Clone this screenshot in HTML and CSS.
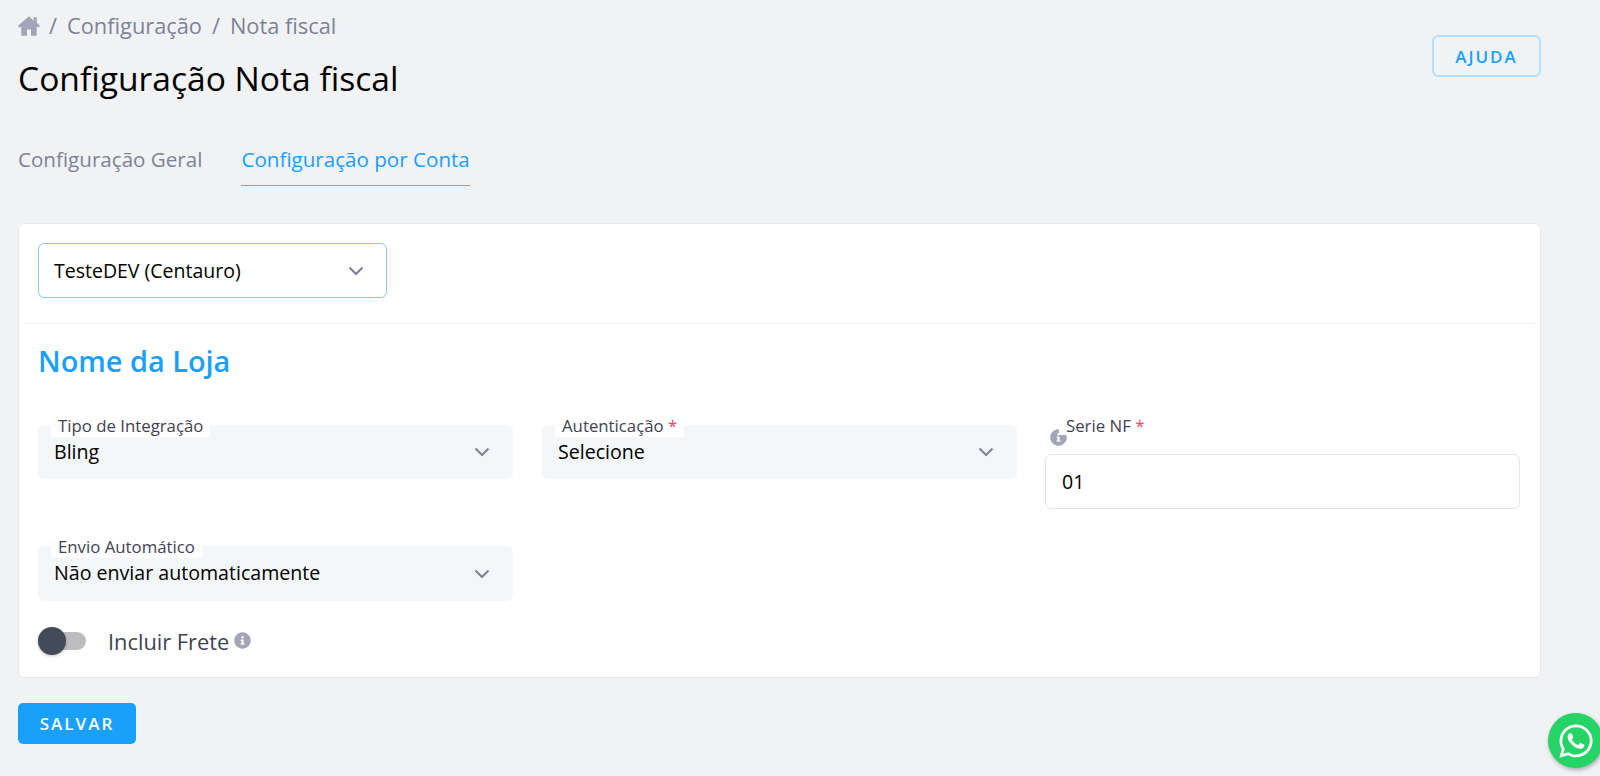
FILE: index.html
```html
<!DOCTYPE html>
<html>
<head>
    <title>Configuração Nota fiscal</title>
    <meta name="viewport" content="width=device-width, initial-scale=1">
    <link rel="stylesheet" href="styles.css">
</head>
<body>
    <div class="page">
        <div class="page-head">
            <div>
                <div class="breadcrumb">
                    <svg class="home-icon" viewBox="0.8 2.5 22.4 20"><path d="M12 2.5L.8 12.2l1.7 2 1.6-1.3V22.500H10V16h4v6.500h5.900V12.900l1.600 1.300 1.700-2-3.300-2.900V3.500h-3.300v3.600z"/></svg>
                    <span>/</span>
                    <span>Configuração</span>
                    <span>/</span>
                    <span>Nota fiscal</span>
                </div>
                <h1 class="page-title">Configuração Nota fiscal</h1>
            </div>
            <button class="button-help">AJUDA</button>
        </div>

        <div class="tabs">
            <a class="tab">Configuração Geral</a>
            <a class="tab tab-active">Configuração por Conta</a>
        </div>

        <div class="card">
            <div class="card-top">
                <div class="account-select">
                    <span>TesteDEV (Centauro)</span>
                    <svg class="chevron" viewBox="0 0 16 10"><path d="M1.5 1.5L8 8l6.5-6.5"/></svg>
                </div>
            </div>
            <div class="card-body">
                <h2 class="store-name">Nome da Loja</h2>
                <div class="form-grid">
                    <div class="field">
                        <label class="field-label">Tipo de Integração</label>
                        <div class="select-box">
                            <span>Bling</span>
                            <svg class="chevron" viewBox="0 0 16 10"><path d="M1.5 1.5L8 8l6.5-6.5"/></svg>
                        </div>
                    </div>
                    <div class="field">
                        <label class="field-label">Autenticação <span class="required">*</span></label>
                        <div class="select-box">
                            <span>Selecione</span>
                            <svg class="chevron" viewBox="0 0 16 10"><path d="M1.5 1.5L8 8l6.5-6.5"/></svg>
                        </div>
                    </div>
                    <div class="field field-input">
                        <svg class="info-icon info-behind" viewBox="0 0 512 512"><path d="M256 8C119.043 8 8 119.083 8 256c0 136.997 111.043 248 248 248s248-111.003 248-248C504 119.083 392.957 8 256 8zm0 110c23.196 0 42 18.804 42 42s-18.804 42-42 42-42-18.804-42-42 18.804-42 42-42zm56 254c0 6.627-5.373 12-12 12h-88c-6.627 0-12-5.373-12-12v-24c0-6.627 5.373-12 12-12h12v-64h-12c-6.627 0-12-5.373-12-12v-24c0-6.627 5.373-12 12-12h64c6.627 0 12 5.373 12 12v100h12c6.627 0 12 5.373 12 12v24z"/></svg>
                        <label class="field-label label-serie">Serie NF <span class="required">*</span></label>
                        <input type="text" class="text-input" value="01">
                    </div>
                    <div class="field field-auto">
                        <label class="field-label">Envio Automático</label>
                        <div class="select-box">
                            <span>Não enviar automaticamente</span>
                            <svg class="chevron" viewBox="0 0 16 10"><path d="M1.5 1.5L8 8l6.5-6.5"/></svg>
                        </div>
                    </div>
                </div>
                <div class="toggle-row">
                    <div class="toggle"><div class="toggle-knob"></div></div>
                    <span class="toggle-label">Incluir Frete</span>
                    <svg class="info-icon" viewBox="0 0 512 512"><path d="M256 8C119.043 8 8 119.083 8 256c0 136.997 111.043 248 248 248s248-111.003 248-248C504 119.083 392.957 8 256 8zm0 110c23.196 0 42 18.804 42 42s-18.804 42-42 42-42-18.804-42-42 18.804-42 42-42zm56 254c0 6.627-5.373 12-12 12h-88c-6.627 0-12-5.373-12-12v-24c0-6.627 5.373-12 12-12h12v-64h-12c-6.627 0-12-5.373-12-12v-24c0-6.627 5.373-12 12-12h64c6.627 0 12 5.373 12 12v100h12c6.627 0 12 5.373 12 12v24z"/></svg>
                </div>
            </div>
        </div>

        <button class="button-save">SALVAR</button>
    </div>

    <a class="whatsapp">
        <svg viewBox="0 0 448 512"><path d="M380.9 97.1C339 55.1 283.2 32 223.9 32c-122.4 0-222 99.6-222 222 0 39.1 10.2 77.3 29.6 111L0 480l117.7-30.9c32.4 17.7 68.9 27 106.1 27h.1c122.3 0 224.1-99.6 224.1-222 0-59.3-25.2-115-67.1-157zm-157 341.6c-33.2 0-65.7-8.9-94-25.7l-6.7-4-69.8 18.3L72 359.2l-4.4-7c-18.5-29.4-28.2-63.3-28.2-98.2 0-101.7 82.8-184.5 184.6-184.5 49.3 0 95.6 19.2 130.4 54.1 34.8 34.9 56.2 81.2 56.1 130.5 0 101.8-84.9 184.6-186.6 184.6zm101.2-138.2c-5.5-2.8-32.8-16.2-37.9-18-5.1-1.9-8.8-2.8-12.5 2.8-3.7 5.6-14.3 18-17.6 21.8-3.2 3.7-6.5 4.2-12 1.4-32.6-16.3-54-29.1-75.5-66-5.7-9.8 5.7-9.1 16.3-30.3 1.8-3.7.9-6.9-.5-9.7-1.4-2.8-12.5-30.1-17.1-41.2-4.5-10.8-9.1-9.3-12.5-9.5-3.2-.2-6.9-.2-10.6-.2-3.7 0-9.7 1.4-14.8 6.9-5.1 5.6-19.4 19-19.4 46.3 0 27.3 19.9 53.7 22.6 57.4 2.8 3.7 39.1 59.7 94.8 83.8 35.2 15.2 49 16.5 66.6 13.9 10.7-1.6 32.8-13.4 37.4-26.4 4.6-13 4.6-24.1 3.2-26.4-1.3-2.5-5-3.9-10.5-6.6z"/></svg>
    </a>
</body>
</html>
```

FILE: styles.css
```css
html, body {
    margin: 0;
    height: 100%;
    overflow: hidden;
}
body {
    font-family: "Open Sans", sans-serif;
    background-color: #f1f2f4;
    color: #000;
}
.page {
    width: 1523px;
    margin-left: 18px;
    padding-top: 12px;
}
.page-head {
    display: flex;
    justify-content: space-between;
    align-items: flex-start;
}
.breadcrumb {
    display: flex;
    align-items: center;
    gap: 10px;
    font-size: 21.8px;
    line-height: 27px;
    color: #7e8299;
}
.home-icon {
    width: 22px;
    height: 20px;
    margin-right: -1px;
    fill: #a1a5b7;
}
.page-title {
    font-size: 33.6px;
    font-weight: 400;
    line-height: 44px;
    margin: 17px 0 0;
}
.button-help {
    margin-top: 23px;
    width: 109px;
    height: 42px;
    background: transparent;
    border: 2px solid #b3e0ff;
    border-radius: 6px;
    color: #18a0fb;
    font-family: inherit;
    font-size: 17px;
    font-weight: 550;
    letter-spacing: 2px;
}
.tabs {
    display: flex;
    gap: 39px;
    margin-top: 39px;
}
.tab {
    font-size: 20.6px;
    line-height: 26px;
    padding: 7px 0 13px;
    color: #7e8299;
    border-bottom: 1px solid transparent;
}
.tab-active {
    color: #18a0fb;
    border-bottom-color: #5aaef5;
}
.card {
    margin-top: 37px;
    height: 455px;
    box-sizing: border-box;
    background-color: #fff;
    border: 1px solid #e6e8ec;
    border-radius: 6px;
    padding: 0 5px;
}
.card-top {
    padding: 19px 14px 25px;
    border-bottom: 1px solid #eff2f5;
}
.account-select {
    width: 349px;
    height: 55px;
    box-sizing: border-box;
    display: flex;
    align-items: center;
    justify-content: space-between;
    padding: 0 22px 0 15px;
    border: 1px solid #8cc4fb;
    border-radius: 6px;
    font-size: 19.5px;
}
.chevron {
    width: 16px;
    height: 10px;
    fill: none;
    stroke: #7e8299;
    stroke-width: 2;
}
.card-body {
    padding: 0 14px;
}
.store-name {
    font-size: 28.9px;
    font-weight: 600;
    line-height: 37px;
    color: #18a0fb;
    margin: 18px 0 0;
}
.form-grid {
    display: grid;
    grid-template-columns: 475px 475px 475px;
    column-gap: 29px;
    margin-top: 46px;
}
.field {
    position: relative;
    height: 54px;
}
.field-auto {
    grid-column: 1;
    height: 55px;
    margin-top: 67px;
}
.field-label {
    position: absolute;
    z-index: 2;
    left: 13px;
    top: -9px;
    padding: 0 7px 1px;
    background-color: #fff;
    font-size: 16.8px;
    line-height: 20px;
    color: #3f4254;
}
.required {
    color: #f1416c;
}
.select-box {
    height: 100%;
    box-sizing: border-box;
    display: flex;
    align-items: center;
    justify-content: space-between;
    padding: 0 23px 0 16px;
    background-color: #f4f7fa;
    border-radius: 6px;
    font-size: 19.6px;
}
.select-box span {
    margin-top: -2px;
}
.field-input .text-input {
    position: absolute;
    left: -1px;
    top: 29px;
    width: 475px;
    height: 55px;
    box-sizing: border-box;
    padding: 0 16px;
    border: 1px solid #e4e6ef;
    border-radius: 6px;
    background-color: #fff;
    font-family: inherit;
    font-size: 19.6px;
    color: #000;
}
.label-serie {
    padding: 0 0 0 7px;
    line-height: 19px;
}
.info-icon {
    width: 17px;
    height: 17px;
    fill: #a1a5b7;
}
.info-behind {
    position: absolute;
    left: 4px;
    top: 4px;
}
.toggle-row {
    display: flex;
    align-items: center;
    margin-top: 26px;
    height: 28px;
}
.toggle {
    position: relative;
    width: 48px;
    height: 18px;
    border-radius: 9px;
    background-color: #bdbdbd;
}
.toggle-knob {
    position: absolute;
    left: 0;
    top: -5px;
    width: 28px;
    height: 28px;
    border-radius: 50%;
    background-color: #424b57;
    box-shadow: 0 1px 3px rgba(0, 0, 0, 0.25);
}
.toggle-label {
    margin-left: 22px;
    margin-right: 5px;
    font-size: 21.8px;
    color: #3f4254;
}
.toggle-row .info-icon {
    margin-top: -2px;
}
.button-save {
    display: block;
    margin-top: 25px;
    width: 118px;
    height: 41px;
    background-color: #18a0fb;
    border: none;
    border-radius: 5px;
    color: #fff;
    font-family: inherit;
    font-size: 17px;
    font-weight: 600;
    letter-spacing: 2px;
}
.whatsapp {
    position: fixed;
    left: 1548px;
    top: 713px;
    width: 55px;
    height: 55px;
    border-radius: 50%;
    background-color: #25d366;
    box-shadow: 1px 2px 4px rgba(0, 0, 0, 0.3);
    display: flex;
    align-items: center;
    justify-content: center;
}
.whatsapp svg {
    width: 34px;
    height: 38px;
    fill: #fff;
}
```
